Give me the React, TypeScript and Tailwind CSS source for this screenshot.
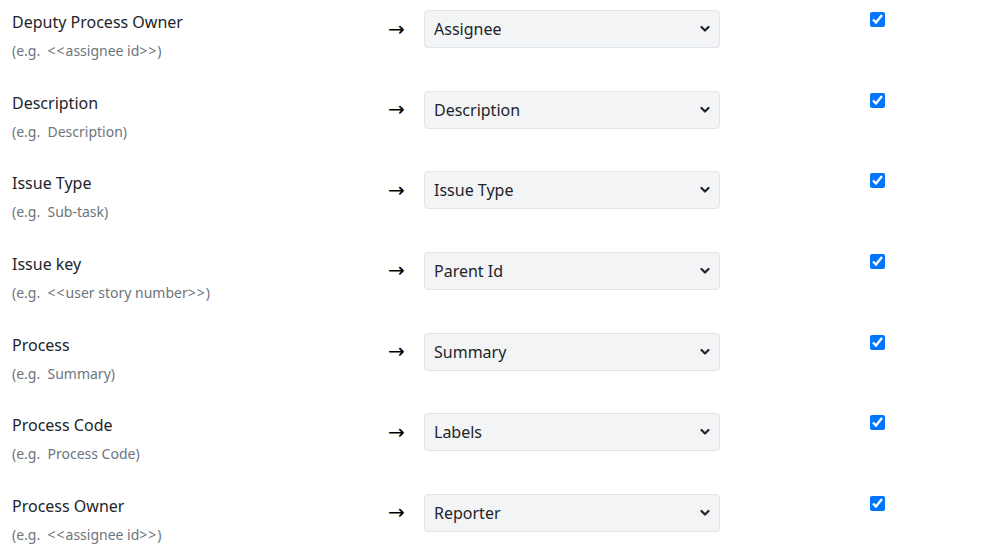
import { useState } from "react";

interface Mapping {
    label: string;
    hint: string;
    field: string;
}

const mappings: Mapping[] = [
    { label: "Deputy Process Owner", hint: "(e.g.  <<assignee id>>)", field: "Assignee" },
    { label: "Description", hint: "(e.g.  Description)", field: "Description" },
    { label: "Issue Type", hint: "(e.g.  Sub-task)", field: "Issue Type" },
    { label: "Issue key", hint: "(e.g.  <<user story number>>)", field: "Parent Id" },
    { label: "Process", hint: "(e.g.  Summary)", field: "Summary" },
    { label: "Process Code", hint: "(e.g.  Process Code)", field: "Labels" },
    { label: "Process Owner", hint: "(e.g.  <<assignee id>>)", field: "Reporter" },
];

const fieldOptions = ["Assignee", "Description", "Issue Type", "Parent Id", "Summary", "Labels", "Reporter"];

const Chevron = () => (
    <svg
        className="pointer-events-none absolute right-[10px] top-1/2 -translate-y-1/2"
        width="10"
        height="7"
        viewBox="0 0 10 7"
        fill="none"
    >
        <path d="M1.5 1.5L5 5L8.5 1.5" stroke="#212529" strokeWidth="2.2" strokeLinecap="round" strokeLinejoin="round" />
    </svg>
);

// Angle brackets in the hints sit a little apart, as in the original page font
const Hint = ({ text }: { text: string }) => (
    <>
        {text.split(/([<>])/).map((part, i) =>
            part === "<" || part === ">" ? (
                <span key={i} className="tracking-[1px]">
                    {part}
                </span>
            ) : (
                part
            )
        )}
    </>
);

const MappingRow = ({ mapping }: { mapping: Mapping }) => {
    const [value, setValue] = useState(mapping.field);
    const [enabled, setEnabled] = useState(true);

    return (
        <div className="flex h-[80.67px] items-start pl-[12px] pt-[10px]">
            {/* Source column */}
            <div className="w-[376px] shrink-0">
                <div className="text-[16px] leading-[24px] text-[#212529]">{mapping.label}</div>
                <div className="mt-[6px] whitespace-pre text-[14px] leading-[21px] text-[#6c757d]">
                    <Hint text={mapping.hint} />
                </div>
            </div>

            {/* Arrow */}
            <div className="flex h-[38px] w-[36px] shrink-0 items-center pb-[1px] font-['DejaVu_Sans',sans-serif] text-[20px] leading-none text-black">
                →
            </div>

            {/* Target field */}
            <div className="relative w-[296px] shrink-0">
                <select
                    value={value}
                    onChange={(e) => setValue(e.target.value)}
                    className="h-[38px] w-full appearance-none rounded-[4px] border border-[#e1e4e8] bg-[#f3f4f6] pl-[9px] pr-8 text-[16px] text-[#212529] focus:outline-none"
                >
                    {fieldOptions.map((opt) => (
                        <option key={opt} value={opt}>
                            {opt}
                        </option>
                    ))}
                </select>
                <Chevron />
            </div>

            {/* Enabled */}
            <div className="ml-[150px] pt-[2px]">
                <input
                    type="checkbox"
                    checked={enabled}
                    onChange={(e) => setEnabled(e.target.checked)}
                    className="m-0 block h-[15px] w-[15px] accent-[#0075ff]"
                />
            </div>
        </div>
    );
};

export default function App() {
    return (
        <div className="h-[553px] w-[998px] overflow-hidden bg-white font-['Noto_Sans',sans-serif]">
            {mappings.map((m) => (
                <MappingRow key={m.label} mapping={m} />
            ))}
        </div>
    );
}
